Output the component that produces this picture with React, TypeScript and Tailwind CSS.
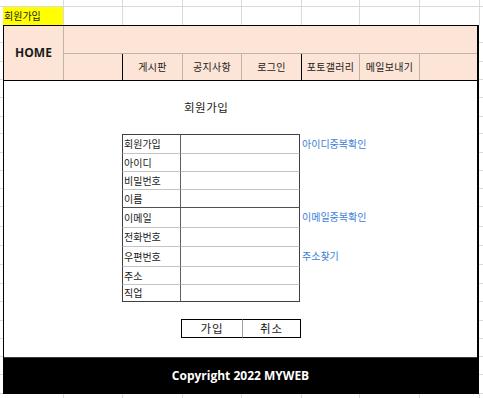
import React from 'react';

const GRID = 'border-[#dadada]';

// column widths of the sheet (x: 3 | 63 | 122 | 182 | 241 | 301 | 359 | 419 | 479)
const cols = ['w-[61px]', 'w-[59px]', 'w-[60px]', 'w-[59px]', 'w-[60px]', 'w-[58px]', 'w-[60px]', 'w-[60px]'];

// row heights seen in the side strips, from y=25 down to y=394
const stripRows = [
  'h-[18px]', 'h-[19px]', 'h-[18px]', 'h-[18px]', 'h-[19px]', 'h-[17px]', 'h-[19px]', 'h-[18px]',
  'h-[18px]', 'h-[18px]', 'h-[20px]', 'h-[19px]', 'h-[19px]', 'h-[19px]', 'h-[18px]', 'h-[19px]',
  'h-[18px]', 'h-[18px]', 'h-[18px]', 'h-[19px]',
];

const formRows = [
  { label: '회원가입', h: 'h-[19px]', line: 'border-t-[#404040]', link: '아이디중복확인' },
  { label: '아이디', h: 'h-[18px]', line: 'border-t-[#c4c4c4]' },
  { label: '비밀번호', h: 'h-[18px]', line: 'border-t-[#c4c4c4]' },
  { label: '이름', h: 'h-[18px]', line: 'border-t-[#c4c4c4]' },
  { label: '이메일', h: 'h-[20px]', line: 'border-t-[#505050]', link: '이메일중복확인' },
  { label: '전화번호', h: 'h-[19px]', line: 'border-t-[#c4c4c4]' },
  { label: '우편번호', h: 'h-[20px]', line: 'border-t-[#c4c4c4]', link: '주소찾기' },
  { label: '주소', h: 'h-[18px]', line: 'border-t-[#c4c4c4]' },
  { label: '직업', h: 'h-[18px]', line: 'border-t-[#c4c4c4]' },
];

const navCells = [
  { w: 'w-[59px]', line: 'border-r-black', text: '' },
  { w: 'w-[60px]', line: 'border-r-[#bfb3aa]', text: '게시판' },
  { w: 'w-[59px]', line: 'border-r-[#bfb3aa]', text: '공지사항' },
  { w: 'w-[60px]', line: 'border-r-black', text: '로그인' },
  { w: 'w-[58px]', line: 'border-r-[#bfb3aa]', text: '포토갤러리' },
  { w: 'w-[60px]', line: 'border-r-[#bfb3aa]', text: '메일보내기' },
];

const Strip: React.FC<{ width: string }> = ({ width }) => (
  <div className={`${width} flex flex-col`}>
    {stripRows.map((h, i) => (
      <div key={i} className={`${h} border-b ${GRID}`} />
    ))}
  </div>
);

const SheetRow: React.FC<{ height: string; first?: React.ReactNode; bottom?: boolean }> = ({ height, first, bottom }) => (
  <div className={`flex ${height} ${bottom ? `border-b ${GRID}` : ''}`}>
    <div className="w-[3px]" />
    {cols.map((w, i) => (
      <div key={i} className={`${w} border-r ${GRID} flex items-stretch`}>
        {i === 0 && first}
      </div>
    ))}
    <div className="flex-1" />
  </div>
);

export default function App() {
  return (
    <div className="w-[483px] h-[398px] overflow-hidden bg-white text-[#1a1a1a] font-['Noto_Sans_CJK_KR',sans-serif]">
      <SheetRow height="h-[7px]" bottom />
      <SheetRow
        height="h-[18px]"
        first={
          <div className="flex-1 bg-[#ffff00] flex items-center pl-[1px] text-[10px] leading-none">회원가입</div>
        }
      />

      <div className="flex h-[369px]">
        <Strip width="w-[3px]" />

        {/* sheet frame */}
        <div className="w-[476px] border-l border-t border-r-2 border-black flex flex-col">
          {/* header */}
          <div className="h-[55px] flex bg-[#fce4d6] border-b border-black">
            <div className="w-[60px] border-r border-[#bfb3aa] flex items-center justify-center font-['Open_Sans',sans-serif] font-bold text-[12px] leading-none">
              HOME
            </div>
            <div className="flex-1 flex flex-col">
              <div className="h-[28px] border-b border-[#bfb3aa]" />
              <div className="flex-1 flex">
                {navCells.map((c, i) => (
                  <div key={i} className={`${c.w} border-r ${c.line} flex items-center justify-center text-[10px] leading-none tracking-[0.3px] text-[#222]`}>
                    {c.text}
                  </div>
                ))}
                <div className="flex-1" />
              </div>
            </div>
          </div>

          {/* body */}
          <div className="h-[276px] bg-white flex flex-col pt-[17px]">
            <div className="h-[19px] flex items-center pl-[180px] text-[11.5px] leading-none tracking-[0.5px]">회원가입</div>

            <div className="mt-[17px] ml-[118px] flex flex-col">
              {formRows.map((r, i) => (
                <div key={r.label} className={`${r.h} flex`}>
                  <div
                    className={`w-[59px] border-l border-l-[#404040] border-t ${r.line} border-r border-r-[#606060] flex items-center pl-[1px] text-[10px] leading-none ${
                      i === formRows.length - 1 ? 'border-b border-b-[#404040]' : ''
                    }`}
                  >
                    {r.label}
                  </div>
                  <div
                    className={`w-[119px] border-t ${r.line} border-r border-r-[#404040] ${
                      i === formRows.length - 1 ? 'border-b border-b-[#404040]' : ''
                    }`}
                  />
                  <div className="flex items-center pl-[2px] text-[10px] leading-none text-[#3b7dd8]">
                    {r.link}
                  </div>
                </div>
              ))}
            </div>

            <div className="mt-[17px] ml-[177px] flex h-[19px]">
              <button className="w-[61px] border border-r-0 border-black flex items-center justify-center text-[11.5px] leading-none tracking-[1px]">
                가입
              </button>
              <button className="w-[59px] border border-black border-l-[#a0a0a0] flex items-center justify-center text-[11.5px] leading-none tracking-[1px]">
                취소
              </button>
            </div>
          </div>

          {/* footer */}
          <div className="flex-1 bg-black border-t border-[#3a3a3a] flex items-center justify-center">
            <span className="text-white font-['Open_Sans',sans-serif] font-bold text-[12px] leading-none">
              Copyright 2022 MYWEB
            </span>
          </div>
        </div>

        <Strip width="flex-1" />
      </div>

      <SheetRow height="h-[6px]" />
    </div>
  );
}
